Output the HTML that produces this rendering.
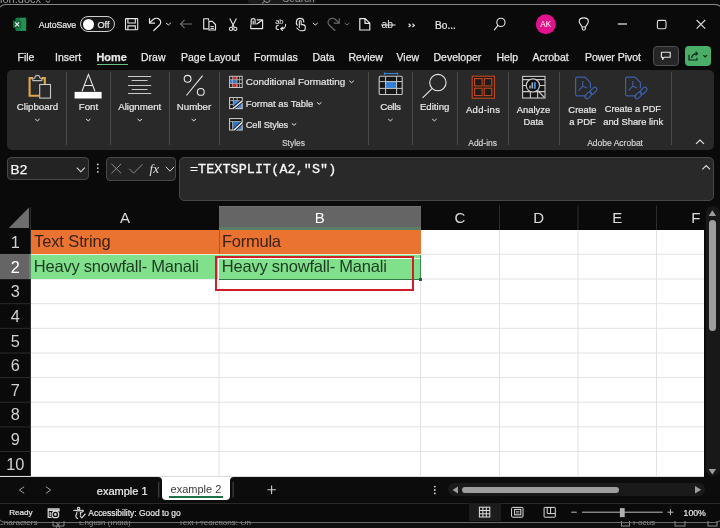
<!DOCTYPE html>
<html><head><meta charset="utf-8">
<style>
*{margin:0;padding:0;box-sizing:border-box}
html,body{width:720px;height:528px;overflow:hidden;background:#0a0a0a;font-family:"Liberation Sans",sans-serif;color:#e6e6e6}
.a{position:absolute}
.t{position:absolute;white-space:nowrap;line-height:1}
svg{position:absolute;overflow:visible}
.tab{position:absolute;top:52px;-webkit-text-stroke:.25px currentColor;font-size:10.5px;white-space:nowrap;line-height:1;color:#e8e8e8}
.rl{position:absolute;-webkit-text-stroke:.2px currentColor;width:100px;font-size:9.7px;white-space:nowrap;line-height:1;color:#e8e8e8;text-align:center}
.gl{position:absolute;-webkit-text-stroke:.15px currentColor;width:100px;font-size:8.5px;white-space:nowrap;line-height:1;color:#d8d8d8;text-align:center}
.sep{position:absolute;top:72px;width:1px;height:73px;background:#4a4a4a}
.ch{position:absolute;font-size:15px;line-height:1;color:#dcdcdc;text-align:center;top:210.2px}
.rh{position:absolute;left:0;width:30.5px;font-size:16.3px;line-height:1;color:#d2d2d2;text-align:center}
</style></head><body><div id="root" style="position:absolute;left:0;top:0;width:720px;height:528px;overflow:hidden;will-change:transform">
<!-- background window strip -->
<div class="a" style="left:0;top:0;width:720px;height:6px;background:#0b0b0b"></div>
<div class="t" style="left:-3px;top:-6px;font-size:11px;color:#9a9a9a">tion.docx</div>
<svg style="left:0;top:0" width="60" height="6"><path d="M45.8 0.6 L48 2.6 L50.2 0.6" fill="none" stroke="#9a9a9a" stroke-width="1"/></svg>
<div class="a" style="left:247.5px;top:-10px;width:68px;height:14px;background:#1a1a1a;border-radius:3px"></div>
<div class="t" style="left:282.5px;top:-5.6px;font-size:10.2px;color:#9a9a9a">Search</div>
<svg style="left:0;top:0" width="360" height="6"><path d="M262 3.6 L264.6 1.2" stroke="#9a9a9a" stroke-width="1"/><circle cx="267" cy="-1" r="3.4" fill="none" stroke="#9a9a9a" stroke-width="1"/></svg>
<!-- main window -->
<div class="a" style="left:-3px;top:4px;width:727px;height:518.5px;background:#0a0a0a;border:1.3px solid #8a8a8a;border-bottom-color:#6a6a6a;border-radius:9px"></div>
<div class="a" style="left:0;top:522.6px;width:720px;height:5.4px;background:#0e0e0e"></div>
<div class="a" style="left:0;top:520.6px;width:720px;height:7.4px;overflow:hidden">
  <div class="t" style="left:-2px;top:-2px;font-size:8.1px;color:#8a8a8a">Characters</div>
  <div class="t" style="left:79px;top:-2px;font-size:8.1px;color:#8a8a8a">English (India)</div>
  <div class="t" style="left:178.6px;top:-2px;font-size:8.1px;color:#8a8a8a">Text Predictions: On</div>
  <div class="t" style="left:633px;top:-2px;font-size:8.1px;color:#8a8a8a">Focus</div>
  <svg style="left:0;top:-520.6px" width="720" height="528">
    <g fill="none" stroke="#8a8a8a" stroke-width="1">
      <path d="M53 518 V526 H64 V518 M56 522 L60 528 M60 522 L56 528"/>
      <rect x="621.5" y="518" width="8" height="8"/>
      <rect x="675" y="519" width="10" height="7"/>
      <rect x="708" y="519" width="9" height="7"/>
    </g>
  </svg>
</div>

<!-- ========== title bar ========== -->
<svg style="left:0;top:0" width="720" height="45">
  <!-- excel icon -->
  <rect x="15.5" y="17.7" width="10.7" height="13.2" rx="1" fill="#1b7a46"/>
  <rect x="20" y="17.7" width="6.2" height="13.2" fill="#2aa05e" opacity=".55"/>
  <rect x="13" y="20.6" width="8.2" height="7.3" rx=".8" fill="#146a3b"/>
  <path d="M15.1 22.3 L19.1 26.3 M19.1 22.3 L15.1 26.3" stroke="#f0f0f0" stroke-width="1.15"/>
  <!-- save -->
  <g fill="none" stroke="#e8e8e8" stroke-width="1.1">
    <rect x="125.5" y="18.6" width="12.2" height="11.2" rx=".6"/>
    <path d="M127.9 18.6 V23 H135.3 V18.6"/>
    <path d="M127.9 29.8 V25.9 H135.3 V29.8"/>
  </g>
  <!-- undo -->
  <g fill="none" stroke="#e8e8e8" stroke-width="1.2" stroke-linecap="round" stroke-linejoin="round">
    <path d="M149.5 18.6 V23.1 H154.6"/>
    <path d="M149.8 22.6 L153.2 19.5 C154.8 18.1 157.6 17.9 159.3 19.3 C161.1 20.8 161.1 23.4 159.6 25 L153.8 30.5"/>
    <path d="M166.3 23.2 L168.4 25 L170.5 23.2" stroke-width="1"/>
  </g>
  <!-- back arrow dim -->
  <g fill="none" stroke="#6e6e6e" stroke-width="1.1">
    <path d="M180.5 24 H192 M184.6 19.9 L180.5 24 L184.6 28.1"/>
  </g>
  <!-- copy -->
  <g fill="none" stroke="#e8e8e8" stroke-width="1.15" stroke-linejoin="round">
    <path d="M208.3 28.9 H203.7 V18.7 H208.5 V20.6"/>
    <path d="M208.9 21.3 H212.3 L215.5 24.5 V30 H208.9 Z"/>
    <path d="M210.5 26.6 H213.9 M210.5 28.4 H213.9" stroke-width="1"/>
  </g>
  <!-- scissors -->
  <g fill="none" stroke="#e8e8e8" stroke-width="1.1">
    <path d="M229.8 18.4 L234.4 27.4 M236.4 18.4 L231.8 27.4"/>
    <circle cx="231" cy="28.9" r="1.6"/>
    <circle cx="235.3" cy="28.9" r="1.6"/>
  </g>
  <!-- paste/picture icon -->
  <g fill="none" stroke="#e8e8e8" stroke-width="1.15" stroke-linejoin="round">
    <path d="M250.8 24.6 V28.6 H262.6 V19.8 H256.8"/>
    <path d="M251.2 24.4 V20 C251.2 18.2 255.1 18.2 255.1 20 V24.4 M253.2 20.8 V24.4"/>
    <path d="M256.4 24.2 L262 20.2"/>
  </g>
  <!-- translate/swap ab -->
  <text x="275.2" y="23.9" font-size="7.6" fill="#e8e8e8" font-family="Liberation Sans" letter-spacing="-.2">ab</text>
  <g fill="none" stroke="#e8e8e8" stroke-width="1.05" stroke-linecap="round">
    <path d="M278.4 25.2 C276.7 25.2 276.1 26.2 276.1 27.4 C276.1 28.7 276.9 29.5 278.5 29.5"/>
    <path d="M285.6 24.4 C285.9 27.4 283.8 28.9 280.9 28.8 M282.7 27.1 L280.7 28.8 L282.5 30.4"/>
  </g>
  <!-- touch hand -->
  <g fill="none" stroke="#e8e8e8" stroke-width="1.1" stroke-linejoin="round" stroke-linecap="round">
    <path d="M297.2 25.2 C295.6 23.2 296 18.4 299.9 18.4 C302.4 18.4 303.8 20 303.8 22"/>
    <path d="M299.3 27.4 V21.6 C299.3 20.4 301.2 20.4 301.2 21.6 V24.6 H302.6 C304.2 24.6 305.3 25.4 305.3 27 V28.6 C305.3 30 304.2 30.8 302.8 30.8 H300.6 C299.4 30.8 298.2 29.6 296.8 28"/>
    <path d="M313.2 23.2 L315.3 25 L317.4 23.2" stroke-width="1"/>
  </g>
  <!-- redo dim -->
  <g fill="none" stroke="#6e6e6e" stroke-width="1.1" stroke-linecap="round">
    <path d="M339.2 18.6 V23.1 H334.1"/>
    <path d="M338.9 22.6 L335.5 19.5 C333.9 18.1 331.1 17.9 329.4 19.3 C327.6 20.8 327.6 23.4 329.1 25 L334.9 30.5"/>
    <path d="M344.9 23.2 L347 25 L349.1 23.2" stroke-width="1"/>
  </g>
  <!-- new doc -->
  <g fill="none" stroke="#e8e8e8" stroke-width="1.2" stroke-linejoin="round">
    <path d="M359.8 18.6 H365.2 L369.8 23.2 V30 H359.8 Z M365 18.8 V23.4 H369.6"/>
  </g>
  <!-- ab strikethrough -->
  <text x="381.6" y="28.2" font-size="10.4" fill="#e8e8e8" font-family="Liberation Sans">ab</text>
  <path d="M381 25 H395.5" stroke="#e8e8e8" stroke-width="1"/>
  <!-- >> -->
  <path d="M408.6 23.8 L410.6 25.4 L408.6 27 M412.4 23.8 L414.4 25.4 L412.4 27" fill="none" stroke="#e8e8e8" stroke-width="1.1"/>
  <text x="435" y="28.6" font-size="10.2" fill="#e8e8e8" stroke="#e8e8e8" stroke-width=".2" font-family="Liberation Sans">Bo...</text>
  <!-- search -->
  <g fill="none" stroke="#e8e8e8" stroke-width="1.1" stroke-linecap="round">
    <circle cx="500.9" cy="22.4" r="4.1"/>
    <path d="M498 25.4 L494.4 29.8"/>
  </g>
  <!-- AK -->
  <circle cx="545.8" cy="24.2" r="10" fill="#e3128c"/>
  <text x="545.8" y="27.4" font-size="8.2" fill="#ffffff" text-anchor="middle" font-family="Liberation Sans">AK</text>
  <!-- bulb -->
  <g fill="none" stroke="#e8e8e8" stroke-width="1.1" stroke-linejoin="round">
    <path d="M582 27 C581.7 25 579.2 23.8 579.2 21.6 C579.2 19.2 581.2 17.9 583.8 17.9 C586.4 17.9 588.4 19.2 588.4 21.6 C588.4 23.8 585.9 25 585.6 27 Z"/>
    <path d="M582.2 27 V28.6 C582.2 29.6 582.8 30.2 583.8 30.2 C584.8 30.2 585.4 29.6 585.4 28.6 V27"/>
  </g>
  <!-- min max close -->
  <path d="M617.8 24 H627" stroke="#dcdcdc" stroke-width="1.3"/>
  <rect x="657.4" y="20.4" width="8.6" height="8.4" rx="1.6" fill="none" stroke="#dcdcdc" stroke-width="1.1"/>
  <path d="M696.6 20 L705.2 28.7 M705.2 20 L696.6 28.7" stroke="#dcdcdc" stroke-width="1.1"/>
</svg>
<div class="t" style="left:38.8px;top:21.1px;font-size:8.8px;letter-spacing:-.12px;-webkit-text-stroke:.2px currentColor;color:#e8e8e8">AutoSave</div>
<div class="a" style="left:80px;top:16.3px;width:35px;height:16.2px;border:1.2px solid #cfcfcf;border-radius:8.1px;background:#161616"></div>
<div class="a" style="left:82.6px;top:18.6px;width:11.6px;height:11.6px;border-radius:50%;background:#fff"></div>
<div class="t" style="left:97.4px;top:20.6px;font-size:9.2px;-webkit-text-stroke:.2px currentColor;color:#e8e8e8">Off</div>

<!-- ========== tabs ========== -->
<div class="tab" style="left:17.5px">File</div>
<div class="tab" style="left:55px">Insert</div>
<div class="tab" style="left:96.5px;font-weight:bold;font-size:10.9px;top:51.6px">Home</div>
<div class="a" style="left:96.6px;top:63.7px;width:31px;height:1.6px;background:#6cbf86"></div>
<div class="tab" style="left:141px">Draw</div>
<div class="tab" style="left:181px">Page Layout</div>
<div class="tab" style="left:254px">Formulas</div>
<div class="tab" style="left:312.5px">Data</div>
<div class="tab" style="left:348.5px">Review</div>
<div class="tab" style="left:396.5px">View</div>
<div class="tab" style="left:433.5px">Developer</div>
<div class="tab" style="left:496.5px">Help</div>
<div class="tab" style="left:532.5px">Acrobat</div>
<div class="tab" style="left:585px">Power Pivot</div>
<div class="a" style="left:653.3px;top:46px;width:25.6px;height:19.8px;border:1px solid #505050;border-radius:4px;background:#262626"></div>
<div class="a" style="left:685.1px;top:46px;width:25.7px;height:19.8px;background:#4aae68;border-radius:4px"></div>
<svg style="left:0;top:0" width="720" height="70">
  <path d="M661.4 52.2 H670.2 V57.2 H664.2 L662.6 59.4 V57.2 H661.4 Z" fill="none" stroke="#e8e8e8" stroke-width="1.1" stroke-linejoin="round"/>
  <path d="M689 54.8 V60 H697 V57.8 M691.6 58 C692 55.2 693.8 53.6 697.4 53.6 M695.6 51.8 L697.6 53.6 L695.6 55.4" fill="none" stroke="#0c2412" stroke-width="1.15" stroke-linejoin="round"/>
  <path d="M703.3 55.1 L705.15 57 L707 55.1" fill="none" stroke="#0c2412" stroke-width="1.1"/>
</svg>

<!-- ========== ribbon ========== -->
<div class="a" style="left:7px;top:69.5px;width:706.8px;height:80.5px;background:#292929;border-radius:5px"></div>
<div class="sep" style="left:66px"></div>
<div class="sep" style="left:110.3px"></div>
<div class="sep" style="left:169.2px"></div>
<div class="sep" style="left:219.2px"></div>
<div class="sep" style="left:368px"></div>
<div class="sep" style="left:412.2px"></div>
<div class="sep" style="left:457px"></div>
<div class="sep" style="left:508.1px"></div>
<div class="sep" style="left:558.6px"></div>
<div class="sep" style="left:671px"></div>

<svg style="left:0;top:0" width="720" height="150">
  <!-- clipboard -->
  <path d="M33 78.1 H29.6 V95.7 H39.2" fill="none" stroke="#e2a548" stroke-width="2.1"/>
  <path d="M41.8 78.1 H44.8 V84" fill="none" stroke="#e2a548" stroke-width="2.1"/>
  <path d="M32.8 80.6 V78.2 H34.8 C35.4 74.4 39.4 74.4 40 78.2 H41.8 V80.6 Z" fill="#292929" stroke="#bdbdbd" stroke-width="1.1" stroke-linejoin="round"/>
  <rect x="39.7" y="84.5" width="10.8" height="13.6" fill="#292929" stroke="#c8c8c8" stroke-width="1.1"/>
  <!-- font A -->
  <path d="M82 91.2 L88.4 74.4 L95 91.2 M84.3 85.5 H92.6" fill="none" stroke="#e8e8e8" stroke-width="1.1"/>
  <rect x="74.6" y="91.9" width="27" height="6.6" fill="#ffffff"/>
  <!-- alignment -->
  <g stroke="#c8c8c8" stroke-width="1">
    <path d="M128 76.5 H151.2 M131.7 80.5 H147.5 M128 85.5 H151.2 M131.7 89.5 H147.5 M128 93.5 H151.2"/>
  </g>
  <!-- percent -->
  <g fill="none" stroke="#e8e8e8" stroke-width="1.1">
    <circle cx="187.6" cy="78.8" r="3.4"/>
    <circle cx="200.8" cy="91.9" r="3.4"/>
    <path d="M202.6 75.6 L186.4 95.5"/>
  </g>
  <!-- conditional formatting icon -->
  <rect x="229.6" y="76.3" width="12.6" height="11.2" fill="#161616"/>
  <rect x="232.4" y="76.8" width="4.8" height="2.8" fill="#d92a2a"/>
  <rect x="230.1" y="80" width="6.9" height="3.2" fill="#2f73cc"/>
  <rect x="232.4" y="84" width="5.2" height="3" fill="#d92a2a"/>
  <rect x="229.6" y="76.3" width="12.6" height="11.2" fill="none" stroke="#c8c8c8" stroke-width="1"/>
  <path d="M232.3 76.3 V87.5 M237 76.3 V87.5 M239.6 76.3 V87.5 M229.6 79.7 H242.2 M229.6 83.5 H242.2" stroke="#c0c0c0" stroke-width=".75"/>
  <!-- format as table -->
  <rect x="229.6" y="97.6" width="12.6" height="11" fill="#141414"/>
  <path d="M233.6 101 H242 V108.6 H233.6 Z" fill="#3f86d8"/>
  <rect x="229.6" y="97.6" width="12.6" height="11" fill="none" stroke="#cfcfcf" stroke-width="1.05"/>
  <path d="M229.6 100.6 H242.2 M229.6 104.6 H233.4 M233.3 97.6 V108.6 M237.2 97.6 V100.6" stroke="#c0c0c0" stroke-width=".8"/>
  <path d="M232.6 108.8 L242.4 100.8" stroke="#0a0a0a" stroke-width="3.2"/>
  <path d="M232.6 108.8 L242.4 100.8" stroke="#e8e8e8" stroke-width="1.5"/>
  <!-- cell styles -->
  <rect x="229.6" y="118.6" width="12.6" height="11.4" fill="#141414"/>
  <path d="M232.6 121.6 H242 V129.8 H232.6 Z" fill="#2f72c8"/>
  <rect x="229.6" y="118.6" width="12.6" height="11.4" fill="none" stroke="#cfcfcf" stroke-width="1.05"/>
  <path d="M229.6 121.6 H242.2 M232.6 121.6 V130" stroke="#c0c0c0" stroke-width=".8"/>
  <path d="M234.2 129.9 L242.4 122.4" stroke="#0a0a0a" stroke-width="3.2"/>
  <path d="M234.2 129.9 L242.4 122.4" stroke="#e8e8e8" stroke-width="1.5"/>
  <!-- cells icon -->
  <path d="M384.4 73.6 H397.6 M384.4 72.4 V74.8 M397.6 72.4 V74.8" stroke="#3a8ee6" stroke-width="1"/>
  <rect x="379.2" y="76.3" width="23" height="18.2" rx="1" fill="#161616" stroke="#c8c8c8" stroke-width="1.1"/>
  <rect x="385.8" y="81.8" width="10.6" height="6.4" fill="#2f7fd6"/>
  <path d="M385.6 76.3 V94.5 M396.6 76.3 V94.5 M379.2 81.6 H402.2 M379.2 88.4 H402.2" stroke="#c8c8c8" stroke-width="1"/>
  <!-- editing -->
  <g fill="none" stroke="#e8e8e8" stroke-width="1.1">
    <circle cx="437.9" cy="82.6" r="8.2"/>
    <path d="M432 88.6 L422.6 97.9"/>
  </g>
  <!-- add-ins -->
  <rect x="472.2" y="76.2" width="22.2" height="22" fill="#1c1c1c"/>
  <g fill="none" stroke="#c44a22" stroke-width="1.1">
    <rect x="472.2" y="76.2" width="22.2" height="22"/>
    <rect x="474.6" y="78.6" width="7.6" height="7.4"/>
    <rect x="484.2" y="78.6" width="7.6" height="7.4"/>
    <rect x="474.6" y="88.2" width="7.6" height="7.4"/>
    <rect x="484.2" y="88.2" width="7.6" height="7.4"/>
  </g>
  <path d="M483.2 76.5 V98 M472.5 87.1 H494" stroke="#5a2a18" stroke-width=".8"/>
  <!-- analyze data -->
  <rect x="522.6" y="76.4" width="22.4" height="21.6" fill="#161616"/>
  <g fill="none" stroke="#c8c8c8" stroke-width="1.1">
    <rect x="522.6" y="76.4" width="22.4" height="21.6"/>
    <path d="M522.6 79.6 H545 M522.6 91.6 H545 M530.4 91.6 V98 M537.6 91.6 V98 M540 85.5 H545 M522.6 85.5 H526"/>
  </g>
  <circle cx="532.9" cy="85.4" r="6.6" fill="#0e0e0e" stroke="#c8c8c8" stroke-width="1.2"/>
  <path d="M537.5 90.2 L544.5 97.6" stroke="#c8c8c8" stroke-width="1.3"/>
  <path d="M530 88.6 V85.4 M532.2 88.6 V82.6" stroke="#d8d8d8" stroke-width="1.2"/>
  <rect x="533.8" y="82.2" width="2" height="6.6" fill="#3a8ee6"/>
  <!-- pdf icons -->
  <g fill="none" stroke="#3f5fa8" stroke-width="1.2" stroke-linejoin="round">
    <path d="M586.5 95.9 H577.2 Q575.6 95.9 575.6 94.3 V78.8 Q575.6 77.2 577.2 77.2 H585 L590.4 82.6 V88.2"/>
    <path d="M582.8 81 V86.2 L578.6 90.6 M582.8 86.2 L587.2 88" stroke-width="1.1"/>
    <rect x="584.4" y="93.3" width="7.8" height="4.2" rx="2.1" transform="rotate(-45 588.3 95.4)"/>
    <rect x="589.6" y="88.6" width="7.8" height="4.2" rx="2.1" transform="rotate(-45 593.5 90.7)"/>
  </g>
  <g fill="none" stroke="#3f5fa8" stroke-width="1.2" stroke-linejoin="round" transform="translate(50 0)">
    <path d="M586.5 95.9 H577.2 Q575.6 95.9 575.6 94.3 V78.8 Q575.6 77.2 577.2 77.2 H585 L590.4 82.6 V88.2"/>
    <path d="M582.8 81 V86.2 L578.6 90.6 M582.8 86.2 L587.2 88" stroke-width="1.1"/>
    <rect x="584.4" y="93.3" width="7.8" height="4.2" rx="2.1" transform="rotate(-45 588.3 95.4)"/>
    <rect x="589.6" y="88.6" width="7.8" height="4.2" rx="2.1" transform="rotate(-45 593.5 90.7)"/>
  </g>
  <!-- small chevrons -->
  <g fill="none" stroke="#e8e8e8" stroke-width="1">
    <path d="M35.2 119 L37.4 120.9 L39.6 119"/>
    <path d="M86 119 L88.2 120.9 L90.4 119"/>
    <path d="M137.6 119 L139.8 120.9 L142 119"/>
    <path d="M191.6 119 L193.8 120.9 L196 119"/>
    <path d="M388.2 119 L390.4 120.9 L392.6 119"/>
    <path d="M432.2 119 L434.4 120.9 L436.6 119"/>
    <path d="M349.4 80.8 L351.6 82.7 L353.8 80.8"/>
    <path d="M317 102.4 L319.2 104.3 L321.4 102.4"/>
    <path d="M291.8 123.4 L294 125.3 L296.2 123.4"/>
    <path d="M696 143.8 L700 140 L704 143.8" stroke-width="1.1"/>
  </g>
</svg>
<div class="rl" style="left:-12.5px;top:102.4px">Clipboard</div>
<div class="rl" style="left:38.5px;top:102.4px">Font</div>
<div class="rl" style="left:89.75px;top:102.4px">Alignment</div>
<div class="rl" style="left:144px;top:102.4px">Number</div>
<div class="t" style="left:245.8px;top:76.8px;font-size:9.9px;-webkit-text-stroke:.2px currentColor">Conditional Formatting</div>
<div class="t" style="left:245.8px;top:99.2px;font-size:9.45px;-webkit-text-stroke:.2px currentColor">Format as Table</div>
<div class="t" style="left:245.8px;top:120.6px;font-size:9.3px;letter-spacing:-.15px;-webkit-text-stroke:.2px currentColor">Cell Styles</div>
<div class="gl" style="left:243.5px;top:139px">Styles</div>
<div class="rl" style="left:340.7px;top:102.2px;font-size:9.9px;letter-spacing:-.3px;text-indent:-.3px">Cells</div>
<div class="rl" style="left:384.65px;top:102.4px;font-size:9.6px">Editing</div>
<div class="rl" style="left:433.1px;top:104.9px;font-size:9.5px;letter-spacing:.3px">Add-ins</div>
<div class="gl" style="left:432.65px;top:139px">Add-ins</div>
<div class="rl" style="left:483.5px;top:104.6px;font-size:9.4px">Analyze</div>
<div class="rl" style="left:483.4px;top:117.3px;font-size:9.4px">Data</div>
<div class="rl" style="left:532.45px;top:104.6px;font-size:9.4px">Create</div>
<div class="rl" style="left:532.5px;top:117.3px;font-size:9.4px">a PDF</div>
<div class="rl" style="left:582.9px;top:104.6px;font-size:9.2px">Create a PDF</div>
<div class="rl" style="left:583.15px;top:117.3px;font-size:9.4px">and Share link</div>
<div class="gl" style="left:565.1px;top:139px">Adobe Acrobat</div>

<!-- ========== formula bar ========== -->
<div class="a" style="left:6.7px;top:157.2px;width:82.5px;height:23.1px;border:1px solid #474747;border-radius:4px;background:#232323"></div>
<div class="t" style="left:10.6px;top:163px;font-size:13.6px;-webkit-text-stroke:.25px currentColor;color:#f8f8f8">B2</div>
<div class="a" style="left:105.8px;top:157px;width:70px;height:23.8px;border:1px solid #474747;border-radius:4px;background:#232323"></div>
<div class="a" style="left:179.2px;top:157px;width:534.6px;height:43.6px;border:1px solid #474747;border-radius:5px;background:#292929"></div>
<div class="t" style="left:189.9px;top:163.3px;font-size:13.4px;letter-spacing:.1px;-webkit-text-stroke:.3px currentColor;font-family:'Liberation Mono',monospace;color:#f8f8f8">=TEXTSPLIT(A2,"S")</div>
<svg style="left:0;top:0" width="720" height="206">
  <path d="M76.8 167.6 L80.8 171.8 L84.8 167.6" fill="none" stroke="#d8d8d8" stroke-width="1.1"/>
  <circle cx="97.8" cy="164.4" r=".9" fill="#d8d8d8"/>
  <circle cx="97.8" cy="168.1" r=".9" fill="#d8d8d8"/>
  <circle cx="97.8" cy="171.8" r=".9" fill="#d8d8d8"/>
  <path d="M111.4 163.8 L121.2 173.4 M121.2 163.8 L111.4 173.4" stroke="#8a8a8a" stroke-width="1"/>
  <path d="M129.3 168.8 L133.6 173.2 L142.4 164.3" fill="none" stroke="#8a8a8a" stroke-width="1"/>
  <text x="149.6" y="172.6" font-size="13" font-style="italic" fill="#e0e0e0" font-family="Liberation Serif">fx</text>
  <path d="M165.9 166.8 L170 171.2 L174.1 166.8" fill="none" stroke="#d8d8d8" stroke-width="1"/>
  <path d="M702.4 169.4 L706.2 165.6 L710 169.4" fill="none" stroke="#e0e0e0" stroke-width="1.1"/>
</svg>

<!-- ========== grid ========== -->
<div class="a" style="left:31px;top:230px;width:673px;height:246.5px;background:#fff"></div>
<svg style="left:0;top:0" width="720" height="528">
  <g stroke="#e2e2e2" stroke-width="1">
    <path d="M31 279 H704 M31 303.7 H704 M31 328.3 H704 M31 353 H704 M31 377.6 H704 M31 402.2 H704 M31 426.9 H704 M31 451.5 H704 M31 254.3 H704"/>
    <path d="M219 230 V476 M420.5 230 V476 M499.5 230 V476 M578 230 V476 M656.5 230 V476"/>
  </g>
  <g stroke="#2c2c2c" stroke-width="1">
    <path d="M0 254.3 H30.5 M0 279 H30.5 M0 303.7 H30.5 M0 328.3 H30.5 M0 353 H30.5 M0 377.6 H30.5 M0 402.2 H30.5 M0 426.9 H30.5 M0 451.5 H30.5 M0 476 H30.5"/>
    <path d="M499.5 205.5 V230 M578 205.5 V230 M656.5 205.5 V230"/>
  </g>
  <path d="M30.5 207 V476" stroke="#2e2e2e" stroke-width="1"/>
  <path d="M8.8 228 L29 207.6 V228 Z" fill="#6e6e6e"/>
</svg>
<div class="a" style="left:219px;top:206.4px;width:201.5px;height:22px;background:#656565;border-top:1px solid #707070"></div>
<div class="a" style="left:219px;top:227.2px;width:201.5px;height:2.6px;background:#5a7d66"></div>
<div class="a" style="left:0;top:254.3px;width:30.5px;height:24.7px;background:#656565"></div>
<div class="a" style="left:29px;top:254.3px;width:1.5px;height:24.7px;background:#5f8a6c"></div>
<div class="ch" style="left:31px;width:188px">A</div>
<div class="ch" style="left:219px;width:201.5px;color:#fff">B</div>
<div class="ch" style="left:420.5px;width:79px">C</div>
<div class="ch" style="left:499.5px;width:78.5px">D</div>
<div class="ch" style="left:578px;width:78.5px">E</div>
<div class="ch" style="left:656.5px;width:78.5px">F</div>
<div class="rh" style="top:234.0px">1</div>
<div class="rh" style="top:258.5px;color:#fff">2</div>
<div class="rh" style="top:283.1px">3</div>
<div class="rh" style="top:307.8px">4</div>
<div class="rh" style="top:332.5px">5</div>
<div class="rh" style="top:357.1px">6</div>
<div class="rh" style="top:381.8px">7</div>
<div class="rh" style="top:406.4px">8</div>
<div class="rh" style="top:431.1px">9</div>
<div class="rh" style="top:455.7px">10</div>

<!-- cell blocks -->
<div class="a" style="left:31px;top:230px;width:389.5px;height:23.8px;background:#ea7331"></div>
<div class="a" style="left:218.8px;top:230px;width:1.2px;height:23.8px;background:#b0561f"></div>
<div class="a" style="left:31px;top:253.8px;width:389.5px;height:1.2px;background:#e4efe0"></div>
<div class="a" style="left:31px;top:255px;width:389.5px;height:24px;background:#80e08b"></div>
<div class="t" style="left:34px;top:232.9px;font-size:16.5px;letter-spacing:-.12px;color:#3a2212">Text String</div>
<div class="t" style="left:222px;top:232.9px;font-size:16.5px;letter-spacing:-.25px;color:#3a2212">Formula</div>
<div class="t" style="left:33.8px;top:257.8px;font-size:16.5px;letter-spacing:-.22px;color:#1c3a22">Heavy snowfall- Manali</div>
<div class="t" style="left:221.8px;top:257.8px;font-size:16.5px;letter-spacing:-.22px;color:#1c3a22">Heavy snowfall- Manali</div>
<!-- selection -->
<div class="a" style="left:218px;top:257.6px;width:1px;height:21.4px;background:#ffffff"></div>
<div class="a" style="left:218px;top:257.6px;width:202px;height:1px;background:#ffffff"></div>
<div class="a" style="left:218.5px;top:278.5px;width:202.5px;height:1px;background:#2f7a4a"></div>
<div class="a" style="left:420px;top:254.5px;width:1px;height:25px;background:#3a8a58"></div>
<div class="a" style="left:418.8px;top:277.6px;width:3.6px;height:3.6px;background:#1e5e3a"></div>
<!-- red box -->
<div class="a" style="left:214.7px;top:255.5px;width:199.3px;height:35px;border:2.5px solid #cc1f2a"></div>

<!-- vertical scrollbar -->
<div class="a" style="left:704.5px;top:206px;width:15.5px;height:271px;background:#0c0c0c"></div>
<div class="a" style="left:705.5px;top:206.4px;width:14px;height:270px;background:#181818;border-radius:7px"></div>
<svg style="left:0;top:0" width="720" height="528">
  <path d="M708.6 215.9 L712.35 210.2 L716.1 215.9 Z" fill="#9e9e9e"/>
  <path d="M708.6 469 L712.35 474.6 L716.1 469 Z" fill="#9e9e9e"/>
</svg>
<div class="a" style="left:708.8px;top:219.8px;width:7.3px;height:111px;background:#9e9e9e;border-radius:3.65px"></div>

<!-- ========== sheet tabs bar ========== -->
<div class="a" style="left:0;top:477px;width:720px;height:25px;background:#0c0c0c"></div>
<div class="a" style="left:0;top:476px;width:704px;height:1.2px;background:#dcdcdc"></div>
<svg style="left:0;top:0" width="720" height="528">
  <path d="M24.2 486.7 L19.4 490 L24.2 493.3" fill="none" stroke="#a0a0a0" stroke-width="1"/>
  <path d="M45.9 486.7 L50.7 490 L45.9 493.3" fill="none" stroke="#a0a0a0" stroke-width="1"/>
  <path d="M158.75 482 V497.6 M233.1 482 V497.6" stroke="#4a4a4a" stroke-width="1"/>
  <!-- active tab -->
  <path d="M158 477 C160.8 477 162 478.2 162 481 V496 C162 498.6 163.4 500.1 166 500.1 H226 C228.6 500.1 230 498.6 230 496 V481 C230 478.2 231.2 477 234 477 Z" fill="#ffffff"/>
  <path d="M271.6 485.6 V494 M267.4 489.8 H275.8" stroke="#d0d0d0" stroke-width="1.1"/>
  <circle cx="434.8" cy="486.6" r=".9" fill="#d8d8d8"/>
  <circle cx="434.8" cy="490" r=".9" fill="#d8d8d8"/>
  <circle cx="434.8" cy="493.4" r=".9" fill="#d8d8d8"/>
</svg>
<div class="t" style="left:96.8px;top:486.3px;font-size:11px;-webkit-text-stroke:.2px currentColor;color:#f0f0f0">example 1</div>
<div class="t" style="left:170.6px;top:484px;font-size:11px;color:#3a3a3a">example 2</div>
<div class="a" style="left:169px;top:496.1px;width:53.8px;height:1.8px;background:#1e7145"></div>
<!-- h scrollbar -->
<div class="a" style="left:448.3px;top:483px;width:256.4px;height:13.3px;background:#1a1a1a;border-radius:6.65px"></div>
<svg style="left:0;top:0" width="720" height="528">
  <path d="M458 486.6 L452.5 490 L458 493.5 Z" fill="#9e9e9e"/>
  <path d="M695 485.9 L701.25 489.7 L695 493.5 Z" fill="#9e9e9e"/>
</svg>
<div class="a" style="left:462.2px;top:486.6px;width:157.1px;height:6.2px;background:#9e9e9e;border-radius:3.1px"></div>

<!-- ========== status bar ========== -->
<div class="a" style="left:0;top:502.8px;width:720px;height:1px;background:#2a2a2a"></div>
<div class="t" style="left:9.2px;top:508.8px;font-size:8.1px;-webkit-text-stroke:.2px currentColor;color:#e8e8e8">Ready</div>
<div class="t" style="left:88.3px;top:508.9px;font-size:8.45px;-webkit-text-stroke:.2px currentColor;color:#e8e8e8">Accessibility: Good to go</div>
<div class="a" style="left:468.8px;top:503px;width:32px;height:18px;background:#1c1c1c"></div>
<svg style="left:0;top:0" width="720" height="528">
  <!-- macro icon -->
  <g fill="none" stroke="#dadada" stroke-width="1.2">
    <path d="M51.6 517.3 H48.2 V508.8 H59 V511.6"/>
    <path d="M48.2 510.2 H59" stroke-width="1.6"/>
    <path d="M50.2 512 V516"/>
    <circle cx="55.4" cy="514.4" r="3.3" fill="#0c0c0c"/>
  </g>
  <circle cx="55.4" cy="514.4" r="1.3" fill="#dadada"/>
  <!-- accessibility -->
  <g fill="none" stroke="#dadada" stroke-width="1.15" stroke-linecap="round" stroke-linejoin="round">
    <circle cx="78.6" cy="508.6" r="1.2"/>
    <path d="M73.8 510.6 C74.4 509.6 75.6 510.8 78.6 510.8 C81.6 510.8 82.8 509.6 83.4 510.6 C83.8 511.4 82 512.4 80.4 512.4 C80.4 513.6 80.6 514.4 80.8 515"/>
    <path d="M76.8 512.4 C77 514.6 75.2 515.4 76 517 C76.4 517.8 77.2 518.4 77.6 518.4"/>
    <path d="M80.2 516.2 L81.8 517.8 L85.2 514"/>
  </g>
  <!-- view icons -->
  <g fill="none" stroke="#e0e0e0" stroke-width="1">
    <rect x="479.4" y="507.2" width="10.4" height="9.8"/>
    <path d="M482.9 507.2 V517 M486.3 507.2 V517 M479.4 510.5 H489.8 M479.4 513.8 H489.8"/>
    <rect x="511.6" y="507.4" width="11.4" height="9.8" rx="1"/>
    <rect x="514.6" y="509.4" width="6.2" height="5.4"/>
    <path d="M516 511.6 H519.4 M516 513 H519.4" stroke-width=".7"/>
    <rect x="544.1" y="507.4" width="11.2" height="9.8" rx=".6"/><path d="M547.2 507.4 V513.6 H555.3 M550.6 507.4 V513.6"/>
  </g>
  <path d="M571.3 512.2 H576.7 M582 512.2 H662.7 M667.5 512.2 H673.4 M670.45 509.2 V515.2" stroke="#bdbdbd" stroke-width="1"/>
  <rect x="619.9" y="508.1" width="4.8" height="9" fill="#b0b0b0"/>
</svg>
<div class="t" style="left:683.6px;top:508.9px;font-size:8.7px;-webkit-text-stroke:.2px currentColor;color:#e8e8e8">100%</div>
</div></body></html>
